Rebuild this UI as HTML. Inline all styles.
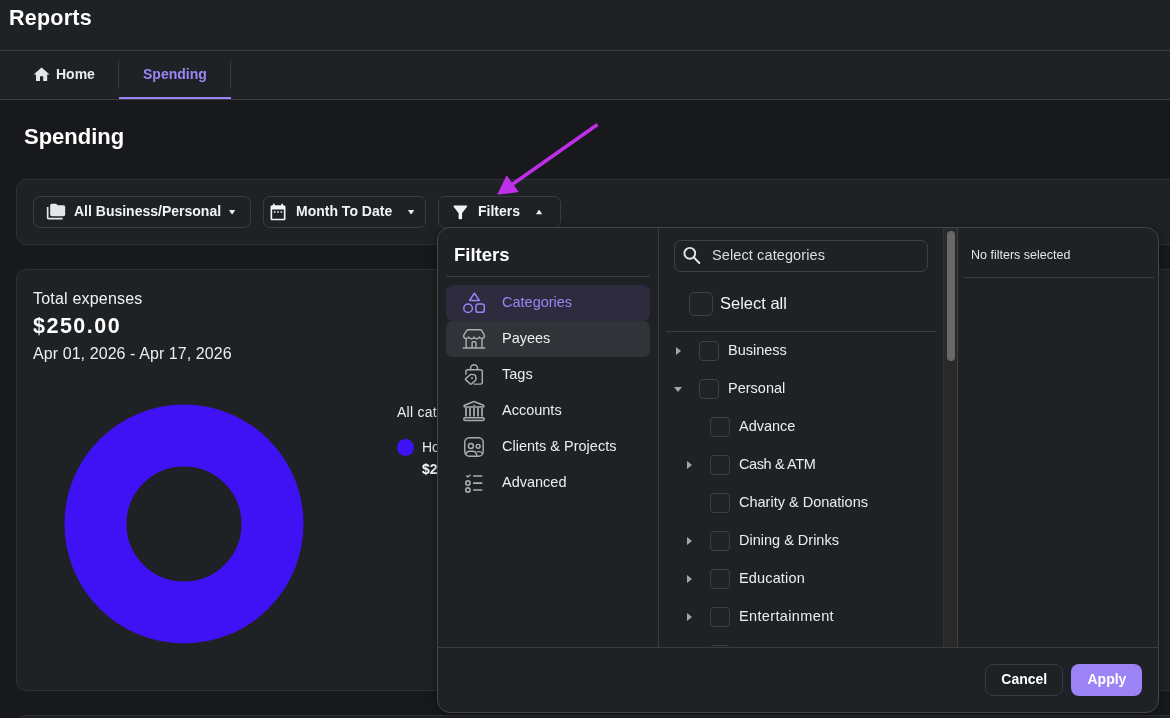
<!DOCTYPE html>
<html lang="en">
<head>
<meta charset="utf-8">
<title>Reports - Spending</title>
<style>
*{box-sizing:border-box;margin:0;padding:0}
html,body{width:1170px;height:718px;overflow:hidden;background:#18191d;color:#f2f3f4;
  font-family:"Liberation Sans",sans-serif;-webkit-font-smoothing:antialiased}
.abs{position:absolute}
#hdr{left:0;top:0;width:1170px;height:100px;background:#1f2225;border-bottom:1px solid #383b40}
#hdrline{left:0;top:50px;width:1170px;height:1px;background:#383b40}
.t{position:absolute;white-space:nowrap;line-height:1}
.card{position:absolute;background:#1f2225;border:1px solid #2e3135;border-radius:10px}
.btn{position:absolute;top:196px;height:32px;border:1px solid #383b40;border-radius:7px;background:#1f2225}
.cb{position:absolute;border:1px solid #3d4045;border-radius:4px;background:#202326}
.row{position:absolute;font-size:14.5px;color:#eceded;white-space:nowrap;line-height:1}
.tri-r{position:absolute;width:0;height:0;border-top:4px solid transparent;border-bottom:4px solid transparent;border-left:5px solid #a3a6a9}
.tri-d{position:absolute;width:0;height:0;border-left:4px solid transparent;border-right:4px solid transparent;border-top:5px solid #a3a6a9}
</style>
</head>
<body>
<div id="root" style="position:absolute;left:0;top:0;width:1170px;height:718px;overflow:hidden;will-change:transform">
<!-- header -->
<div id="hdr" class="abs"></div>
<div id="hdrline" class="abs"></div>
<div class="t" id="tReports" style="left:9px;top:8px;letter-spacing:.25px;font-size:21.5px;font-weight:700;color:#fff">Reports</div>

<!-- tabs -->
<svg class="abs" style="left:32.4px;top:65.2px" width="19.2" height="19.2" viewBox="0 0 24 24"><path fill="#e4e6e7" d="M10 20v-6h4v6h5v-8h3L12 3 2 12h3v8z"/></svg>
<div class="t" id="tHome" style="left:56px;top:67px;font-size:14px;font-weight:700;color:#eceded">Home</div>
<div class="abs" style="left:118px;top:61px;width:1px;height:28px;background:#383b40"></div>
<div class="t" id="tSpTab" style="left:143px;top:67px;font-size:14px;font-weight:700;color:#9d84f6">Spending</div>
<div class="abs" style="left:230px;top:61px;width:1px;height:28px;background:#383b40"></div>
<div class="abs" style="left:119px;top:97px;width:112px;height:2px;background:#9d84f6"></div>

<!-- page title -->
<div class="t" id="tSpending" style="left:24px;top:126px;font-size:22px;font-weight:700;color:#fff">Spending</div>

<!-- toolbar card -->
<div class="card" style="left:16px;top:179px;width:1200px;height:66px"></div>
<div class="btn" style="left:33px;width:218px"></div>
<div class="t" id="tAll" style="left:74px;top:204px;font-size:14px;font-weight:700;color:#f2f3f4">All Business/Personal</div>
<div class="btn" style="left:263px;width:163px"></div>
<div class="t" id="tMonth" style="left:296px;top:204px;font-size:14px;font-weight:700;color:#f2f3f4">Month To Date</div>
<div class="btn" style="left:438px;width:123px"></div>
<div class="t" id="tFilt" style="left:478px;top:204px;font-size:14px;font-weight:700;color:#f2f3f4">Filters</div>


<svg class="abs" style="left:46px;top:202px" width="20" height="20" viewBox="0 0 24 24"><path fill="#e4e6e7" d="M3 6H1v13c0 1.1.9 2 2 2h17v-2H3V6z"/><path fill="#e4e6e7" d="M21 4h-7l-2-2H7c-1.1 0-1.990.9-1.990 2L5 15c0 1.1.9 2 2 2h14c1.1 0 2-.9 2-2V6c0-1.100-.9-2-2-2z"/></svg>
<svg class="abs" style="left:268px;top:202px" width="20" height="20" viewBox="0 0 24 24"><path fill="#f2f3f4" d="M9 11H7v2h2v-2zm4 0h-2v2h2v-2zm4 0h-2v2h2v-2zm2-7h-1V2h-2v2H8V2H6v2H5c-1.110 0-1.990.9-1.990 2L3 20c0 1.1.89 2 2 2h14c1.1 0 2-.9 2-2V6c0-1.100-.9-2-2-2zm0 16H5V9h14v11z"/></svg>
<svg class="abs" style="left:449.8px;top:201.8px" width="20.7" height="20.7" viewBox="0 0 24 24"><path fill="#f2f3f4" d="M4.250 5.610C6.270 8.200 10 13 10 13v6c0 .55.45 1 1 1h2c.55 0 1-.45 1-1v-6s3.720-4.800 5.740-7.390c.51-.66.040-1.610-.79-1.610H5.040c-.83 0-1.300.950-.79 1.610z"/></svg>
<svg class="abs" style="left:229.100px;top:209.900px;overflow:visible" width="7" height="5" viewBox="0 0 7 5"><path fill="#e8eaeb" d="M0 0H6.200L3.800 3.800Q3.100 4.500 2.400 3.800Z"/></svg>
<svg class="abs" style="left:407.900px;top:209.900px;overflow:visible" width="7" height="5" viewBox="0 0 7 5"><path fill="#e8eaeb" d="M0 0H6.200L3.800 3.800Q3.100 4.500 2.400 3.800Z"/></svg>
<svg class="abs" style="left:535.900px;top:209.700px;overflow:visible" width="7" height="5" viewBox="0 0 7 5"><path fill="#e8eaeb" d="M0 4.200H6.200L3.800 .4Q3.100 -.3 2.400 .4Z"/></svg>

<!-- chart card -->
<div class="card" style="left:16px;top:269px;width:1200px;height:422px"></div>
<div class="t" id="tTotal" style="left:33px;top:290.5px;font-size:16px;letter-spacing:.2px;color:#f2f3f4">Total expenses</div>
<div class="t" id="tAmt" style="left:33px;top:316px;font-size:21.5px;letter-spacing:1.5px;font-weight:700;color:#fff">$250.00</div>
<div class="t" id="tDate" style="left:33px;top:346px;font-size:16px;letter-spacing:.08px;color:#eceded">Apr 01, 2026 - Apr 17, 2026</div>
<svg class="abs" style="left:59.5px;top:400px" width="248" height="248" viewBox="-124 -124 248 248"><circle cx="0" cy="0" r="88.5" fill="none" stroke="#3f12f5" stroke-width="62"/></svg>
<div class="t" id="tAllcat" style="left:397px;top:404.5px;font-size:14px;letter-spacing:.25px;color:#eceded">All categories</div>
<div class="abs" style="left:397px;top:439px;width:17px;height:17px;border-radius:50%;background:#3f12f5"></div>
<div class="t" id="tHo" style="left:422px;top:440px;font-size:14px;color:#eceded">Housing</div>
<div class="t" id="tS2" style="left:422px;top:461.5px;font-size:14px;font-weight:700;color:#fff">$250.00</div>

<!-- next card peeking -->
<div class="card" style="left:16px;top:715px;width:1200px;height:100px"></div>

<!-- arrow annotation -->
<svg class="abs" style="left:0;top:0" width="1170" height="260"><line x1="597.5" y1="124.5" x2="510" y2="186" stroke="#bf2ee9" stroke-width="3.6"/><polygon points="497.2,194.8 506.6,175.3 518.9,192" fill="#bf2ee9"/></svg>

<!-- popup -->
<div id="pop" class="abs" style="left:437px;top:227px;width:722px;height:486px;background:#1f2225;border:1px solid #42454a;border-radius:13px;box-shadow:0 2px 12px rgba(0,0,0,.42);overflow:hidden">
</div>

<!-- popup: left column -->
<div class="t" id="pTitle" style="left:454px;top:246px;font-size:18.5px;font-weight:700;color:#fff">Filters</div>
<div class="abs" style="left:446px;top:276px;width:204px;height:1px;background:#383b40"></div>
<div class="abs" style="left:446px;top:285px;width:204px;height:35.5px;border-radius:7px;background:#2d2b3d"></div>
<div class="abs" style="left:446px;top:321px;width:204px;height:36px;border-radius:7px;background:#303337"></div>
<div class="t" id="m0" style="left:502px;top:295px;font-size:14.5px;color:#9d84f6">Categories</div>
<div class="t" id="m1" style="left:502px;top:331px;font-size:14.5px;color:#eceded">Payees</div>
<div class="t" id="m2" style="left:502px;top:367px;font-size:14.5px;color:#eceded">Tags</div>
<div class="t" id="m3" style="left:502px;top:403px;font-size:14.5px;color:#eceded">Accounts</div>
<div class="t" id="m4" style="left:502px;top:439px;font-size:14.5px;color:#eceded">Clients &amp; Projects</div>
<div class="t" id="m5" style="left:502px;top:475px;font-size:14.5px;color:#eceded">Advanced</div>

<!-- popup: menu icons -->
<svg class="abs" style="left:462px;top:290px" width="24" height="24" viewBox="0 0 24 24" fill="none" stroke="#9d84f6" stroke-width="1.500" stroke-linejoin="round"><path d="M12.400 3.200L17.300 10.500H7.600Z"/><circle cx="6.100" cy="18.200" r="4.300"/><rect x="13.950" y="14.050" width="8.300" height="8.300" rx="2.200"/></svg>
<svg class="abs" style="left:462px;top:326px" width="24" height="24" viewBox="0 0 24 24" fill="none" stroke="#a9adaf" stroke-width="1.450" stroke-linejoin="round" stroke-linecap="round"><path d="M6.300 3.800H18.100Q19.300 3.800 19.900 4.900L22.300 9.200Q22.800 10.400 22.300 11.200A2.640 1.900 0 0 1 17.300 11A2.640 1.900 0 0 1 12.050 11A2.640 1.900 0 0 1 6.800 11A2.640 1.900 0 0 1 1.800 11.200Q1.300 10.400 1.800 9.200L4.500 4.900Q5.100 3.800 6.300 3.800Z"/><path d="M4.100 12.900V21.800M20 12.900V21.800M1.200 22H22.800M10.100 21.800V16.600Q10.100 15.800 10.900 15.800H13.200Q14 15.800 14 16.600V21.800"/></svg>
<svg class="abs" style="left:462px;top:362px" width="24" height="24" viewBox="0 0 24 24" fill="none" stroke="#a9adaf" stroke-width="1.450" stroke-linejoin="round" stroke-linecap="round"><path d="M8.600 7.600V6.200A3.450 3.450 0 0 1 15.500 6.200V7.600"/><path d="M3.900 12.200V9.600Q3.900 7.800 5.700 7.800H18.500Q20.300 7.800 20.300 9.600V20.300Q20.300 22.100 18.500 22.100H12.400"/><path d="M3.900 16.400L8.300 12.700Q8.900 12.300 9.600 12.400L12.700 12.900Q13.500 13.100 13.600 13.900L14 17Q14.100 17.700 13.600 18.200L9.600 21.900Q8.800 22.500 8.100 21.800L3.800 17.900Q3.100 17.100 3.900 16.400Z"/><circle cx="9.900" cy="16.100" r=".5" fill="#a9adaf" stroke-width="1"/></svg>
<svg class="abs" style="left:462px;top:398px" width="24" height="24" viewBox="0 0 24 24" fill="none" stroke="#a9adaf" stroke-width="1.500" stroke-linejoin="round" stroke-linecap="round"><path d="M11.400 3.700Q12 3.400 12.600 3.700L21.400 7.200Q22 7.500 22 8.100Q22 9.100 21 9.100H3Q2 9.100 2 8.100Q2 7.500 2.600 7.200Z"/><path d="M4 10V18.600M8 10V18.600M12 10V18.600M16 10V18.600M20 10V18.600" stroke-width="1.700" stroke-linecap="butt"/><rect x="1.750" y="19.700" width="20.500" height="2.700" rx="1.350"/><circle cx="12" cy="7.300" r=".45" fill="#a9adaf" stroke-width=".6"/></svg>
<svg class="abs" style="left:462px;top:434px" width="24" height="24" viewBox="0 0 24 24" fill="none" stroke="#a9adaf" stroke-width="1.450" stroke-linejoin="round" stroke-linecap="round"><rect x="2.750" y="3.750" width="18.400" height="18.400" rx="4.600"/><circle cx="8.900" cy="12" r="2.450"/><circle cx="16.100" cy="12.300" r="1.950"/><path d="M3.900 20.400Q4.400 17.200 7.300 17.200H10.600Q14.300 17.200 14.600 20.400V22"/><path d="M15.600 17.600H17.300Q19.900 17.700 20.600 19.600"/></svg>
<svg class="abs" style="left:462px;top:470px" width="24" height="24" viewBox="0 0 24 24" fill="none" stroke="#a9adaf" stroke-width="1.700" stroke-linejoin="round"><path d="M11.100 6H20.300M11.100 13.050H20.300M11.100 20H20.300"/><path d="M4.200 5.600L5.800 7.100L8.500 4.700" stroke-width="1.400"/><circle cx="5.900" cy="13.050" r="2.150" stroke-width="1.600"/><circle cx="5.900" cy="20" r="2.150" stroke-width="1.600"/></svg>
<div class="abs" style="left:658px;top:228px;width:1px;height:419px;background:#383b40"></div>

<!-- popup: middle column -->
<div class="abs" style="left:674px;top:240px;width:254px;height:32px;border:1px solid #3d4045;border-radius:7px"></div>
<svg class="abs" style="left:681px;top:244px" width="22" height="22" viewBox="0 0 22 22"><circle cx="8.800" cy="9.300" r="5.400" fill="none" stroke="#e4e6e7" stroke-width="1.9"/><path d="M12.800 13.400L18.300 19" stroke="#e4e6e7" stroke-width="2" stroke-linecap="round"/></svg>
<div class="t" id="pSearch" style="left:712px;top:248px;font-size:14.5px;letter-spacing:.11px;color:#dcdedf">Select categories</div>
<div class="cb" style="left:689px;top:292px;width:24px;height:24px;border-radius:5px"></div>
<div class="t" id="pSelAll" style="left:720px;top:295px;font-size:16.5px;color:#f2f3f4">Select all</div>
<div class="abs" style="left:666px;top:331px;width:270px;height:1px;background:#383b40"></div>
<div class="abs" style="left:0;top:0;width:1170px;height:647px;overflow:hidden;pointer-events:none">
<div class="tri-r" style="left:676px;top:347px"></div><div class="cb" style="left:699px;top:341px;width:20px;height:20px"></div><div class="row" id="r0" style="left:728px;top:343px">Business</div>
<div class="tri-d" style="left:674px;top:387px"></div><div class="cb" style="left:699px;top:379px;width:20px;height:20px"></div><div class="row" id="r1" style="left:728px;top:381px">Personal</div>
<div class="cb" style="left:710px;top:417px;width:20px;height:20px"></div><div class="row" id="r2" style="left:739px;top:419px">Advance</div>
<div class="tri-r" style="left:687px;top:461px"></div><div class="cb" style="left:710px;top:455px;width:20px;height:20px"></div><div class="row" id="r3" style="letter-spacing:-.4px;left:739px;top:457px">Cash &amp; ATM</div>
<div class="cb" style="left:710px;top:493px;width:20px;height:20px"></div><div class="row" id="r4" style="left:739px;top:495px">Charity &amp; Donations</div>
<div class="tri-r" style="left:687px;top:537px"></div><div class="cb" style="left:710px;top:531px;width:20px;height:20px"></div><div class="row" id="r5" style="left:739px;top:533px">Dining &amp; Drinks</div>
<div class="tri-r" style="left:687px;top:575px"></div><div class="cb" style="left:710px;top:569px;width:20px;height:20px"></div><div class="row" id="r6" style="letter-spacing:.15px;left:739px;top:571px">Education</div>
<div class="tri-r" style="left:687px;top:613px"></div><div class="cb" style="left:710px;top:607px;width:20px;height:20px"></div><div class="row" id="r7" style="letter-spacing:.36px;left:739px;top:609px">Entertainment</div>
<div class="tri-r" style="left:687px;top:651px"></div><div class="cb" style="left:710px;top:645px;width:20px;height:20px"></div><div class="row" id="r8" style="left:739px;top:647px">Financial</div>
</div>
<div class="abs" style="left:943px;top:228px;width:15px;height:419px;background:#292929;border-left:1px solid #343434;border-right:1px solid #3d4045"></div>
<div class="abs" style="left:947px;top:231px;width:8px;height:130px;border-radius:4px;background:#686868"></div>

<!-- popup: right column -->
<div class="t" id="pNo" style="left:971px;top:249px;font-size:12.5px;color:#e4e6e7">No filters selected</div>
<div class="abs" style="left:963px;top:277px;width:191px;height:1px;background:#383b40"></div>

<!-- popup: footer -->
<div class="abs" style="left:438px;top:647px;width:720px;height:1px;background:#383b40"></div>
<div class="abs" style="left:985px;top:664px;width:78px;height:32px;border:1px solid #383b40;border-radius:8px"></div>
<div class="t" id="pCancel" style="left:1001.3px;top:672px;font-size:14px;font-weight:700;color:#fff">Cancel</div>
<div class="abs" style="left:1071px;top:664px;width:71px;height:32px;border-radius:8px;background:#9d84f6"></div>
<div class="t" id="pApply" style="left:1087.5px;top:672px;font-size:14px;font-weight:700;color:#fff">Apply</div>
</div>
</body>
</html>
